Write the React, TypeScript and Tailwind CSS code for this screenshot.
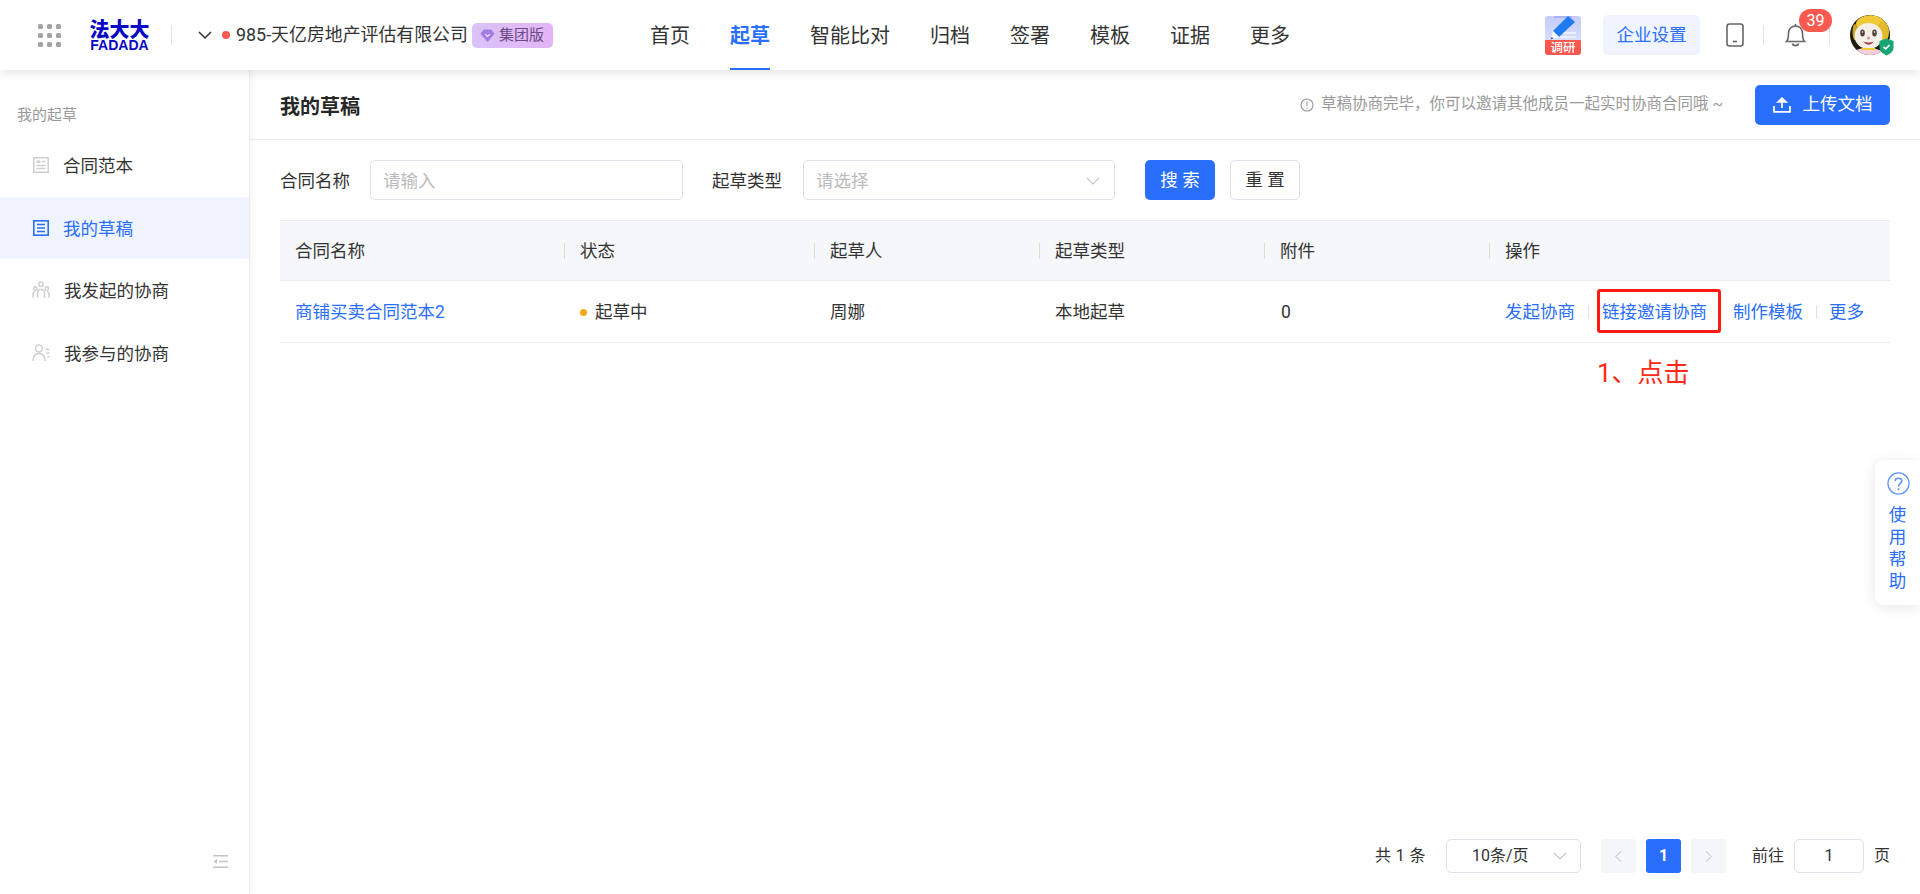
import React from "react";

function GridIcon() {
  return (
    <div className="grid grid-cols-3 gap-[4px] w-[23px] ml-[38px] shrink-0">
      {Array.from({ length: 9 }).map((_, i) => (
        <span key={i} className="w-[5px] h-[5px] rounded-[1.5px] bg-[#a3a3a3]" />
      ))}
    </div>
  );
}

function Logo() {
  return (
    <div className="ml-[28px] w-[61px] h-[31px] shrink-0 flex flex-col items-center text-[#0808c4]">
      <span className="text-[20px] leading-[20px] font-black whitespace-nowrap">法大大</span>
      <span className="text-[14px] leading-[11px] font-bold font-['Liberation_Sans',sans-serif]">FADADA</span>
    </div>
  );
}

function SurveyIcon() {
  return (
    <div className="relative w-[36px] h-[39px] rounded-[3px] overflow-hidden bg-gradient-to-b from-[#c3cbfa] to-[#e6e9fb] shrink-0">
      <svg viewBox="0 0 36 26" className="absolute left-0 top-0 w-[36px] h-[26px]">
        <path d="M9 1 H27" stroke="#aab4f3" strokeWidth="2" />
        <path d="M18 17 H31 M14 21 H31" stroke="#f4f6ff" strokeWidth="1.4" />
        <path d="M23 0 L30 6 L14 21 L8 15 Z" fill="#1f7bf2" />
        <path d="M8 15 L14 21 L6 23.5 Z" fill="#ffffff" />
        <path d="M6.8 21 L8.4 22.6 L5.6 23.6 Z" fill="#2b3a8c" />
      </svg>
      <div className="absolute left-0 right-0 bottom-0 h-[15px] bg-[#f9584f] text-white text-[12.5px] leading-[15px] text-center font-medium">调研</div>
    </div>
  );
}

function Avatar() {
  return (
    <div className="relative w-[40px] h-[40px] shrink-0">
      <svg viewBox="0 0 40 40" className="w-[40px] h-[40px]">
        <defs>
          <clipPath id="av"><circle cx="20" cy="20" r="20" /></clipPath>
        </defs>
        <g clipPath="url(#av)">
          <rect width="40" height="40" fill="#1f1a12" />
          <ellipse cx="21" cy="9" rx="15" ry="9" fill="#f0ca35" />
          <ellipse cx="33" cy="17" rx="6" ry="11" fill="#e3b92c" />
          <ellipse cx="5" cy="17" rx="2.5" ry="8" fill="#c9a52a" />
          <ellipse cx="18.5" cy="21" rx="14" ry="13" fill="#f5efe8" />
          <ellipse cx="12.5" cy="18" rx="2.3" ry="3.4" fill="#54413c" />
          <ellipse cx="24.5" cy="18" rx="2.3" ry="3.4" fill="#54413c" />
          <circle cx="12.5" cy="17" r="0.8" fill="#ffffff" />
          <circle cx="24.5" cy="17" r="0.8" fill="#ffffff" />
          <circle cx="18.5" cy="23" r="1.6" fill="#d99aa0" />
          <path d="M13 26.5 Q18.5 33 24 26.5 Q18.5 28.5 13 26.5 Z" fill="#a83e4c" />
          <path d="M6 35 Q19 30 32 36 L32 40 L6 40 Z" fill="#f4cfdb" />
          <rect x="12" y="33" width="13" height="2" fill="#f0ca35" />
        </g>
      </svg>
      <svg viewBox="0 0 16 18" className="absolute left-[29px] top-[23px] w-[15px] h-[18px]">
        <path d="M8 0 L15.5 2.5 V9 C15.5 13.5 12 16.5 8 18 C4 16.5 0.5 13.5 0.5 9 V2.5 Z" fill="#17a673" />
        <path d="M4.8 8.8 L7.2 11 L11.3 6.8" stroke="#fff" strokeWidth="1.7" fill="none" />
      </svg>
    </div>
  );
}

function Divider() {
  return <span className="block w-[1px] h-[20px] bg-[#e3e3e3] shrink-0" />;
}

const navs = ["首页", "起草", "智能比对", "归档", "签署", "模板", "证据", "更多"];

function Header() {
  return (
    <header className="relative z-20 h-[70px] shrink-0 flex items-center bg-white shadow-[0_2px_10px_rgba(0,0,0,0.12)]">
      <div className="w-[650px] shrink-0 flex items-center">
        <GridIcon />
        <Logo />
        <div className="ml-[21px]"><Divider /></div>
        <svg viewBox="0 0 16 16" className="ml-[25px] w-[16px] h-[16px] shrink-0" fill="none" stroke="#333" strokeWidth="1.5">
          <path d="M2 5 L8 11 L14 5" />
        </svg>
        <span className="ml-[9px] w-[8px] h-[8px] rounded-full bg-[#fb5a52] shrink-0" />
        <span className="ml-[6px] text-[17.9px] text-[#333] whitespace-nowrap">985-天亿房地产评估有限公司</span>
        <span className="ml-[4px] h-[25px] w-[81px] pl-[8px] shrink-0 rounded-[5px] bg-gradient-to-r from-[#d9c3f7] to-[#e4b4f7] flex items-center gap-[4px] text-[15px] text-[#6b4a86]">
          <svg viewBox="0 0 16 16" className="w-[15px] h-[15px] shrink-0">
            <path d="M4 1.5 H12 L15.5 6 L8 15 L0.5 6 Z" fill="#a57be6" />
            <path d="M5.5 6.5 L8 9 L10.5 6.5" stroke="#f3e9ff" strokeWidth="1.4" fill="none" />
          </svg>
          集团版
        </span>
      </div>
      <nav className="flex items-center gap-[40px] h-full">
        {navs.map((n) => (
          <a
            key={n}
            className={
              n === "起草"
                ? "h-full flex items-center text-[20px] font-bold text-[#2a6ffb] border-b-[2.5px] border-[#2a6ffb] pt-[4.5px]"
                : "h-full flex items-center text-[20px] text-[#333] pt-[2px]"
            }
          >
            {n}
          </a>
        ))}
      </nav>
      <div className="ml-auto pr-[30px] flex items-center">
        <SurveyIcon />
        <button className="ml-[22px] w-[97px] h-[40px] rounded-[5px] bg-[#f0f4ff] text-[#2a6ffb] text-[17.5px]">企业设置</button>
        <svg viewBox="0 0 18 24" className="ml-[26px] w-[18px] h-[24px] shrink-0" fill="none" stroke="#666" strokeWidth="1.6">
          <rect x="1" y="1" width="16" height="22" rx="2.5" />
          <path d="M7 18.5 H11" />
        </svg>
        <div className="ml-[19px]"><Divider /></div>
        <div className="relative ml-[21px] w-[21px] h-[24px] shrink-0">
          <svg viewBox="0 0 21 24" className="w-[21px] h-[24px]" fill="none" stroke="#666" strokeWidth="1.6">
            <path d="M10.5 1 V3" />
            <path d="M1.5 18.5 C3.5 16.5 3.5 14 3.5 10 C3.5 6 6.5 3 10.5 3 C14.5 3 17.5 6 17.5 10 C17.5 14 17.5 16.5 19.5 18.5 Z" />
            <path d="M7.5 20.5 C8 23.3 13 23.3 13.5 20.5" />
          </svg>
          <span className="absolute left-[14px] top-[-14px] w-[33px] h-[23px] rounded-full bg-[#fa5a50] text-white text-[16px] leading-[23px] text-center">39</span>
        </div>
        <div className="ml-[23px]"><Divider /></div>
        <div className="ml-[20px]"><Avatar /></div>
      </div>
    </header>
  );
}

function IconTemplate() {
  return (
    <svg viewBox="0 0 16 16" className="w-[16px] h-[16px] shrink-0" fill="none" stroke="#cfcfcf" strokeWidth="1.5">
      <rect x="0.75" y="0.75" width="14.5" height="14.5" />
      <rect x="3.5" y="3.5" width="4" height="2.5" fill="#cfcfcf" stroke="none" />
      <path d="M9 4.5 H12.5 M3.5 8.5 H12.5 M3.5 11.5 H12.5" strokeWidth="1.3" />
    </svg>
  );
}
function IconDraft() {
  return (
    <svg viewBox="0 0 16 16" className="w-[16px] h-[16px] shrink-0" fill="none" stroke="#2a6ffb" strokeWidth="1.6">
      <rect x="0.8" y="0.8" width="14.4" height="14.4" />
      <path d="M4 4.5 H12 M4 8 H12 M4 11.5 H12" strokeWidth="1.6" />
    </svg>
  );
}
function IconGroup() {
  return (
    <svg viewBox="0 0 18 18" className="w-[18px] h-[18px] shrink-0 -ml-[1px]" fill="none" stroke="#cfcfcf" strokeWidth="1.5">
      <circle cx="9" cy="3.2" r="2.2" />
      <circle cx="3.2" cy="7.5" r="1.7" />
      <circle cx="14.8" cy="7.5" r="1.7" />
      <path d="M5.5 16.5 V11.5 C5.5 7.5 12.5 7.5 12.5 11.5 V16.5" />
      <path d="M1 16.5 V13 C1 11.5 1.8 10.8 3 10.8 M17 16.5 V13 C17 11.5 16.2 10.8 15 10.8" />
    </svg>
  );
}
function IconPerson() {
  return (
    <svg viewBox="0 0 18 18" className="w-[18px] h-[18px] shrink-0 -ml-[1px]" fill="none" stroke="#cfcfcf" strokeWidth="1.5">
      <circle cx="7" cy="4.5" r="3.5" />
      <path d="M1 17 C1 11 4 9.5 7 9.5 C10 9.5 13 11 13 17" />
      <path d="M13.5 5.5 H17.5 M14.5 9 H17.5 M15.5 12.5 H17.5" />
    </svg>
  );
}

function SideItem({ icon, label, active }: { icon: React.ReactNode; label: string; active?: boolean }) {
  return (
    <div
      className={
        active
          ? "h-[62.5px] pl-[33px] flex items-center gap-[15px] bg-[#f0f4ff] text-[#2a6ffb] text-[17.5px]"
          : "h-[62.5px] pl-[33px] flex items-center gap-[15px] text-[#333] text-[17.5px]"
      }
    >
      {icon}
      <span className="-ml-[1px] pt-[2px]">{label}</span>
    </div>
  );
}

function Sidebar() {
  return (
    <aside className="relative z-10 w-[250px] shrink-0 bg-white border-r border-[#eeeeee] shadow-[2px_0_6px_rgba(0,0,0,0.04)] flex flex-col">
      <div className="pl-[17px] pt-[35px] h-[64px] text-[15px] leading-[20px] text-[#999]">我的起草</div>
      <SideItem icon={<IconTemplate />} label="合同范本" />
      <SideItem icon={<IconDraft />} label="我的草稿" active />
      <SideItem icon={<IconGroup />} label="我发起的协商" />
      <SideItem icon={<IconPerson />} label="我参与的协商" />
      <div className="mt-auto mb-[26px] mr-[21px] self-end">
        <svg viewBox="0 0 15 13" className="w-[15px] h-[13px]" fill="none" stroke="#c4c4c4" strokeWidth="1.4">
          <path d="M0 0.8 H15 M0 12.2 H15 M6 6.5 H15" />
          <path d="M0.5 6.5 L4 4 V9 Z" fill="#c4c4c4" stroke="none" />
        </svg>
      </div>
    </aside>
  );
}

function Chevron({ className }: { className: string }) {
  return (
    <svg viewBox="0 0 14 8" className={className} fill="none" stroke="#c4c6cc" strokeWidth="1.1">
      <path d="M1 1 L7 7 L13 1" />
    </svg>
  );
}

const columns = "grid grid-cols-[285px_250px_225px_225px_225px_1fr]";

function HeadCell({ label, divider = true }: { label: string; divider?: boolean }) {
  return (
    <div className="relative pl-[15px] pt-[1px] flex items-center">
      {label}
      {divider && <span className="absolute right-0 top-1/2 -translate-y-1/2 w-[1.5px] h-[16px] bg-[#dcdcdc]" />}
    </div>
  );
}

function Actions() {
  return (
    <div className="pl-[15px] pt-[1px] flex items-center text-[#2a6ffb]">
      <a>发起协商</a>
      <span className="ml-[13px] mr-[13px] w-[1px] h-[14px] bg-[#e3e3e3]" />
      <a className="relative">
        链接邀请协商
        <span className="absolute left-[-5px] top-[-10px] w-[124px] h-[44px] border-[3px] border-[#ff1a12] rounded-[3px]" />
        <span className="absolute left-[-5px] top-[56px] text-[26px] leading-[36px] text-[#ff2a1a] whitespace-nowrap">1、点击</span>
      </a>
      <a className="ml-[26px]">制作模板</a>
      <span className="ml-[13px] mr-[12px] w-[1px] h-[14px] bg-[#e3e3e3]" />
      <a>更多</a>
    </div>
  );
}

function Table() {
  return (
    <div className="mx-[30px] mt-[20px] text-[17.5px]">
      <div className={columns + " h-[61px] bg-[#f5f7fa] border-t border-b border-[#e9ebef] text-[#333]"}>
        <HeadCell label="合同名称" />
        <HeadCell label="状态" />
        <HeadCell label="起草人" />
        <HeadCell label="起草类型" />
        <HeadCell label="附件" />
        <HeadCell label="操作" divider={false} />
      </div>
      <div className={columns + " h-[62px] border-b border-[#e9ebef] text-[#333]"}>
        <div className="pl-[15px] pt-[1px] flex items-center text-[#2a6ffb]">商铺买卖合同范本2</div>
        <div className="pl-[15px] pt-[1px] flex items-center">
          <span className="w-[7px] h-[7px] rounded-full bg-[#f9a81c] mr-[8px]" />
          起草中
        </div>
        <div className="pl-[15px] pt-[1px] flex items-center">周娜</div>
        <div className="pl-[15px] pt-[1px] flex items-center">本地起草</div>
        <div className="pl-[16px] pt-[1px] flex items-center">0</div>
        <Actions />
      </div>
    </div>
  );
}

function Filters() {
  return (
    <div className="mx-[30px] mt-[21px] flex items-center h-[40px] text-[17.5px] text-[#333]">
      <span className="w-[71px] pt-[2px]">合同名称</span>
      <div className="ml-[19px] w-[313px] h-[40px] px-[12px] pt-[2px] flex items-center rounded-[5px] border-[1.5px] border-[#dfe1e8] text-[#bbbbbb]">请输入</div>
      <span className="ml-[29px] w-[71px] pt-[2px]">起草类型</span>
      <div className="ml-[20px] w-[312px] h-[40px] px-[12px] pt-[2px] flex items-center justify-between rounded-[5px] border-[1.5px] border-[#dfe1e8] text-[#bbbbbb]">
        请选择
        <Chevron className="w-[14px] h-[8px] mr-[2px]" />
      </div>
      <button className="ml-[30px] w-[70px] h-[40px] rounded-[5px] bg-[#2a6ffb] text-white">搜 索</button>
      <button className="ml-[15px] w-[70px] h-[40px] rounded-[5px] border-[1.5px] border-[#dfe1e8] text-[#333]">重 置</button>
    </div>
  );
}

function TitleBar() {
  return (
    <div className="h-[70px] -mb-[1px] shrink-0 border-b border-[#eeeeee] pl-[30px] pr-[30px] flex items-center">
      <h1 className="mt-[4px] text-[20px] font-bold text-[#262626]">我的草稿</h1>
      <div className="ml-auto flex items-center text-[15.5px] text-[#999]">
        <svg viewBox="0 0 14 14" className="w-[14px] h-[14px] mr-[7px]" fill="none" stroke="#999" strokeWidth="1.1">
          <circle cx="7" cy="7" r="6" />
          <path d="M7 3.5 V8 M7 9.5 V10.7" />
        </svg>
        草稿协商完毕，你可以邀请其他成员一起实时协商合同哦 ~
      </div>
      <button className="ml-[32px] w-[135px] h-[40px] rounded-[5px] bg-[#2a6ffb] text-white text-[17.5px] flex items-center justify-center gap-[12px]">
        <svg viewBox="0 0 18 16" className="w-[18px] h-[16px]" fill="none" stroke="#fff" strokeWidth="1.7">
          <path d="M1 9 V14.8 H17 V9" />
          <path d="M9 11 V2" />
          <path d="M5 5 L9 1.2 L13 5 Z" fill="#fff" />
        </svg>
        上传文档
      </button>
    </div>
  );
}

function Pagination() {
  return (
    <div className="mt-auto mb-[21px] pr-[30px] flex items-center justify-end h-[34px] text-[16px] text-[#333]">
      <span className="tracking-[0.4px]">共 1 条</span>
      <div className="ml-[20px] w-[135px] h-[34px] rounded-[5px] border-[1.5px] border-[#dfe1e8] flex items-center pl-[25px] pr-[13px] justify-between">
        10条/页
        <Chevron className="w-[14px] h-[8px]" />
      </div>
      <button className="ml-[20px] w-[35px] h-[34px] rounded-[3px] bg-[#f5f6fa] flex items-center justify-center">
        <svg viewBox="0 0 8 14" className="w-[7px] h-[13px]" fill="none" stroke="#b5b8c0" strokeWidth="1.1"><path d="M7 1 L1 7 L7 13" /></svg>
      </button>
      <button className="ml-[10px] w-[35px] h-[34px] rounded-[3px] bg-[#2a6ffb] text-white font-bold">1</button>
      <button className="ml-[10px] w-[35px] h-[34px] rounded-[3px] bg-[#f5f6fa] flex items-center justify-center">
        <svg viewBox="0 0 8 14" className="w-[7px] h-[13px]" fill="none" stroke="#b5b8c0" strokeWidth="1.1"><path d="M1 1 L7 7 L1 13" /></svg>
      </button>
      <span className="ml-[26px]">前往</span>
      <div className="ml-[10px] w-[70px] h-[34px] rounded-[5px] border-[1.5px] border-[#dfe1e8] flex items-center justify-center">1</div>
      <span className="ml-[10px]">页</span>
    </div>
  );
}

function HelpTab() {
  return (
    <div className="absolute right-0 top-[460px] z-30 w-[45px] h-[145px] rounded-l-[8px] bg-white shadow-[0_2px_14px_rgba(0,0,0,0.10)] flex flex-col items-center pt-[12px] text-[#2a6ffb] text-[17.5px] leading-[22px]">
      <svg viewBox="0 0 24 24" className="w-[23px] h-[23px] mb-[9px] mr-[-1px] shrink-0" fill="none" stroke="#5f93fb" strokeWidth="1.3">
        <circle cx="12" cy="12" r="11" />
        <path d="M8.5 9.5 C8.5 5.5 15.5 5.5 15.5 9.5 C15.5 12 12 12 12 15" strokeWidth="1.6" />
        <path d="M12 17 V19" strokeWidth="1.8" />
      </svg>
      <span>使</span>
      <span>用</span>
      <span>帮</span>
      <span>助</span>
    </div>
  );
}

export default function App() {
  return (
    <div className="relative w-[1920px] h-[894px] overflow-hidden bg-white flex flex-col font-['Roboto','Noto_Sans_CJK_SC',sans-serif]">
      <Header />
      <div className="flex-1 flex min-h-0">
        <Sidebar />
        <main className="flex-1 flex flex-col min-w-0">
          <TitleBar />
          <Filters />
          <Table />
          <Pagination />
        </main>
      </div>
      <HelpTab />
    </div>
  );
}
